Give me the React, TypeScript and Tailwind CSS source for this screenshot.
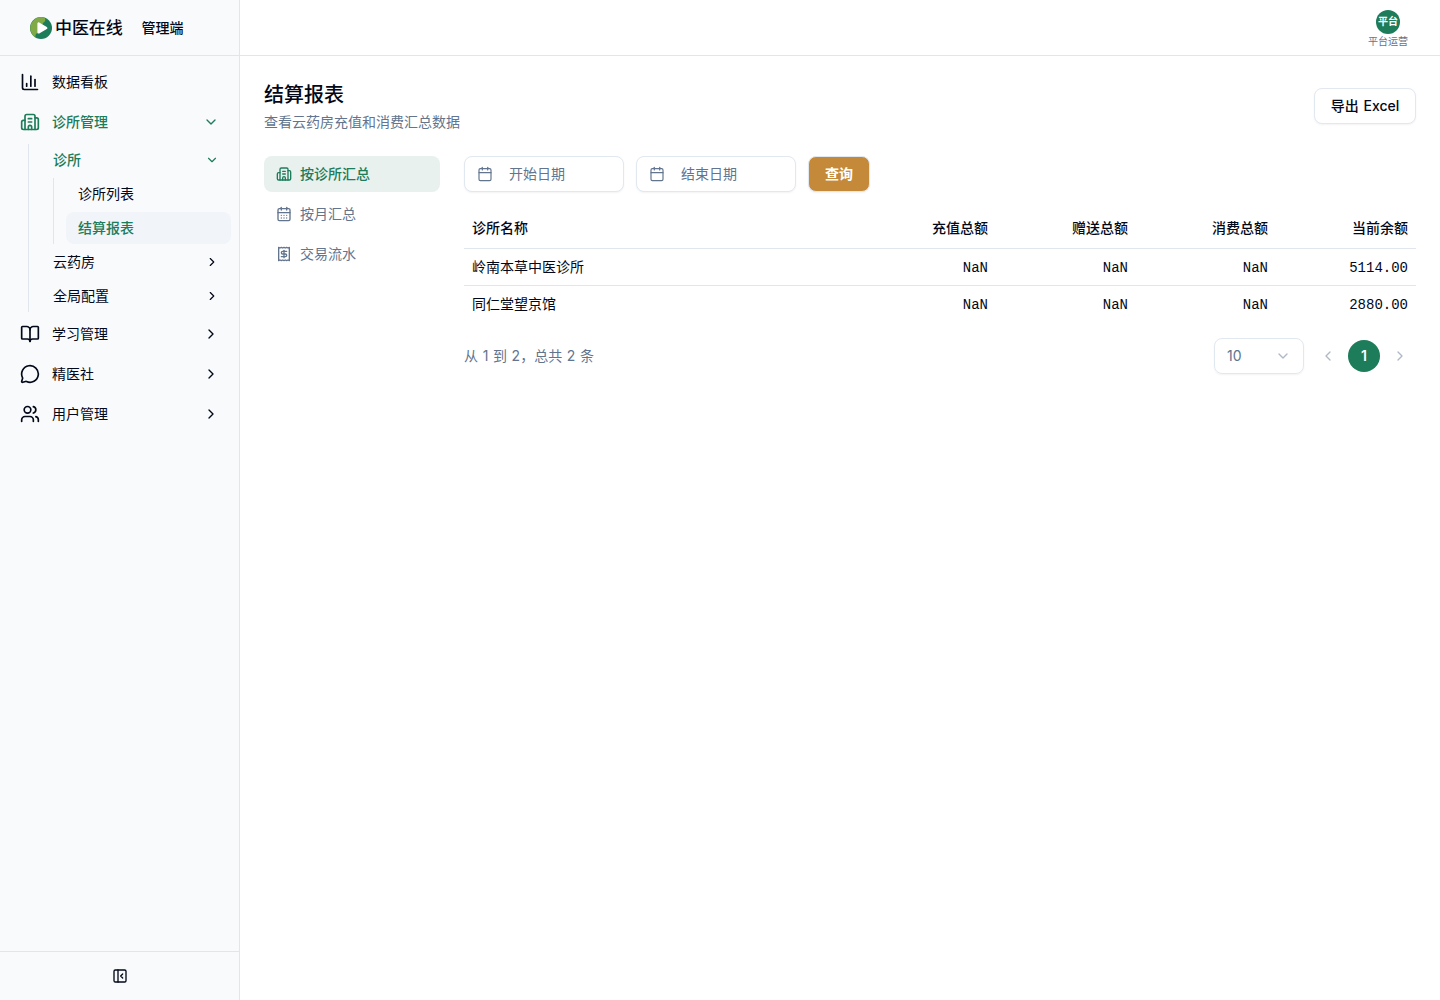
import React from "react";
import {
  BookOpen,
  Building2,
  Calendar,
  CalendarDays,
  ChartColumn,
  ChevronDown,
  ChevronLeft,
  ChevronRight,
  MessageCircle,
  PanelLeftClose,
  Receipt,
  Users,
} from "lucide-react";

const rows = [
  { name: "岭南本草中医诊所", balance: "5114.00" },
  { name: "同仁堂望京馆", balance: "2880.00" },
];

const tabs = [
  { label: "按诊所汇总", icon: Building2, active: true },
  { label: "按月汇总", icon: CalendarDays, active: false },
  { label: "交易流水", icon: Receipt, active: false },
];

const bottomMenu = [
  { label: "学习管理", icon: BookOpen },
  { label: "精医社", icon: MessageCircle },
  { label: "用户管理", icon: Users },
];

function Logo() {
  return (
    <svg className="h-[22px] w-[22px]" viewBox="0 0 22 22">
      <circle cx="11" cy="11" r="11" fill="#1d7c5a" />
      <path d="M14.500 .6A11 11 0 0 0 5.500 20.500C5 18 6 16.500 8 15.500L13.500 5.500C15.500 4.500 16 2.500 14.500 .6Z" fill="#7faa45" />
      <path d="M8.600 6.600v8.800l7.600-4.400z" fill="#fff" stroke="#fff" strokeWidth="2.400" strokeLinejoin="round" />
    </svg>
  );
}

function Sidebar() {
  return (
    <aside className="flex w-60 shrink-0 flex-col border-r border-[#e1e5ee] bg-[#f9fafc]">
      <div className="flex h-14 shrink-0 items-center border-b border-[#e1e5ee] pl-[30px]">
        <Logo />
        <span className="ml-[3px] pt-0.5 text-[17px] font-medium tracking-[-0.1px]">中医在线</span>
        <span className="ml-[19px] text-sm font-medium">管理端</span>
      </div>

      <nav className="flex-1 px-2 pt-2">
        <div className="flex h-9 items-center gap-3 px-3 text-sm">
          <ChartColumn className="h-5 w-5" />
          <span className="flex-1">数据看板</span>
        </div>
        <div className="mt-1 flex h-9 items-center gap-3 px-3 text-sm font-medium text-[#1d7c5a]">
          <Building2 className="h-5 w-5" />
          <span className="flex-1">诊所管理</span>
          <ChevronDown className="h-4 w-4" />
        </div>

        {/* Nested clinic menu */}
        <div className="ml-5 mt-1 border-l border-[#e1e5ee] pl-3">
          <div className="flex h-8 items-center justify-between px-3 text-sm font-medium text-[#1d7c5a]">
            诊所
            <ChevronDown className="h-3.5 w-3.5" />
          </div>
          <div className="ml-3 mt-0.5 border-l border-[#e1e5ee] pl-3">
            <div className="flex h-8 items-center px-3 text-sm">诊所列表</div>
            <div className="mt-0.5 flex h-8 items-center rounded-lg bg-[#f1f4f9] px-3 text-sm font-medium text-[#1d7c5a]">
              结算报表
            </div>
          </div>
          <div className="mt-0.5 flex h-8 items-center justify-between px-3 text-sm">
            云药房
            <ChevronRight className="h-3.5 w-3.5" />
          </div>
          <div className="mt-0.5 flex h-8 items-center justify-between px-3 text-sm">
            全局配置
            <ChevronRight className="h-3.5 w-3.5" />
          </div>
        </div>

        <div className="mt-1 space-y-1">
          {bottomMenu.map(({ label, icon: Icon }) => (
            <div key={label} className="flex h-9 items-center gap-3 px-3 text-sm">
              <Icon className="h-5 w-5" />
              <span className="flex-1">{label}</span>
              <ChevronRight className="h-4 w-4" />
            </div>
          ))}
        </div>
      </nav>

      <div className="flex h-[49px] shrink-0 items-center justify-center border-t border-[#e1e5ee]">
        <PanelLeftClose className="h-4 w-4" />
      </div>
    </aside>
  );
}

function DateField({ label }: { label: string }) {
  return (
    <div className="flex h-9 w-40 items-center gap-4 rounded-lg border border-slate-200 bg-white px-3 text-sm text-slate-500 shadow-xs">
      <Calendar className="h-4 w-4" strokeWidth={1.75} />
      {label}
    </div>
  );
}

export default function App() {
  return (
    <div className="flex h-screen bg-white font-['Inter','Noto_Sans_CJK_SC',sans-serif] text-[#020817]">
      <Sidebar />

      <div className="flex min-w-0 flex-1 flex-col">
        <header className="flex h-14 shrink-0 items-center justify-end border-b border-[#e1e5ee] pr-8">
          <div className="flex flex-col items-center pt-0.5">
            <div className="flex h-6 w-6 items-center justify-center rounded-full bg-[#1d7c5a] text-[10px] font-semibold text-white">
              平台
            </div>
            <span className="mt-px text-[10px] leading-[13px] text-slate-500">平台运营</span>
          </div>
        </header>

        <main className="flex-1 p-6">
          <div className="flex items-center justify-between">
            <div>
              <h1 className="pt-px text-xl leading-7 font-medium">结算报表</h1>
              <p className="mt-[3px] text-sm text-slate-500">查看云药房充值和消费汇总数据</p>
            </div>
            <button className="h-9 w-[102px] rounded-lg border border-slate-200 bg-white text-sm font-medium shadow-xs [word-spacing:1px]">
              导出 Excel
            </button>
          </div>

          <div className="mt-6 flex gap-6">
            <div className="w-44 shrink-0 space-y-1">
              {tabs.map(({ label, icon: Icon, active }) => (
                <div
                  key={label}
                  className={`flex h-9 items-center gap-2 rounded-lg px-3 text-sm ${
                    active ? "bg-[#e8f1ee] font-medium text-[#1d7c5a]" : "text-slate-500"
                  }`}
                >
                  <Icon className="h-4 w-4" />
                  {label}
                </div>
              ))}
            </div>

            <div className="min-w-0 flex-1">
              <div className="flex gap-3">
                <DateField label="开始日期" />
                <DateField label="结束日期" />
                <button className="h-9 rounded-lg border border-slate-200 bg-[#c48a3a] px-4 text-sm font-semibold text-white shadow-xs">
                  查询
                </button>
              </div>

              <table className="mt-4 w-full table-fixed text-sm">
                <thead>
                  <tr className="h-10 border-b border-[#e1e5ee] text-right">
                    <th className="px-2 text-left font-medium">诊所名称</th>
                    <th className="w-[140px] px-2 font-medium">充值总额</th>
                    <th className="w-[140px] px-2 font-medium">赠送总额</th>
                    <th className="w-[140px] px-2 font-medium">消费总额</th>
                    <th className="w-[140px] px-2 font-medium">当前余额</th>
                  </tr>
                </thead>
                <tbody>
                  {rows.map((row) => (
                    <tr key={row.name} className="h-[37px] border-b border-[#e1e5ee] text-right last:border-0">
                      <td className="px-2 text-left">{row.name}</td>
                      <td className="px-2 pt-0.5 font-['Liberation_Mono',monospace]">NaN</td>
                      <td className="px-2 pt-0.5 font-['Liberation_Mono',monospace]">NaN</td>
                      <td className="px-2 pt-0.5 font-['Liberation_Mono',monospace]">NaN</td>
                      <td className="px-2 pt-0.5 font-['Liberation_Mono',monospace]">{row.balance}</td>
                    </tr>
                  ))}
                </tbody>
              </table>

              {/* Pagination */}
              <div className="mt-4 flex items-center text-sm text-slate-500">
                <span className="[word-spacing:0.7px]">从 1 到 2，总共 2 条</span>
                <div className="ml-auto flex h-9 w-[90px] items-center justify-between rounded-lg border border-slate-200 pr-3 pl-3 shadow-xs">
                  10
                  <ChevronDown className="h-4 w-4 opacity-50" />
                </div>
                <div className="ml-2 flex items-center gap-1">
                  <span className="flex h-8 w-8 items-center justify-center">
                    <ChevronLeft className="h-4 w-4 opacity-50" />
                  </span>
                  <span className="flex h-8 w-8 items-center justify-center rounded-full bg-[#1d7c5a] font-semibold text-white">
                    1
                  </span>
                  <span className="flex h-8 w-8 items-center justify-center">
                    <ChevronRight className="h-4 w-4 opacity-50" />
                  </span>
                </div>
              </div>
            </div>
          </div>
        </main>
      </div>
    </div>
  );
}
